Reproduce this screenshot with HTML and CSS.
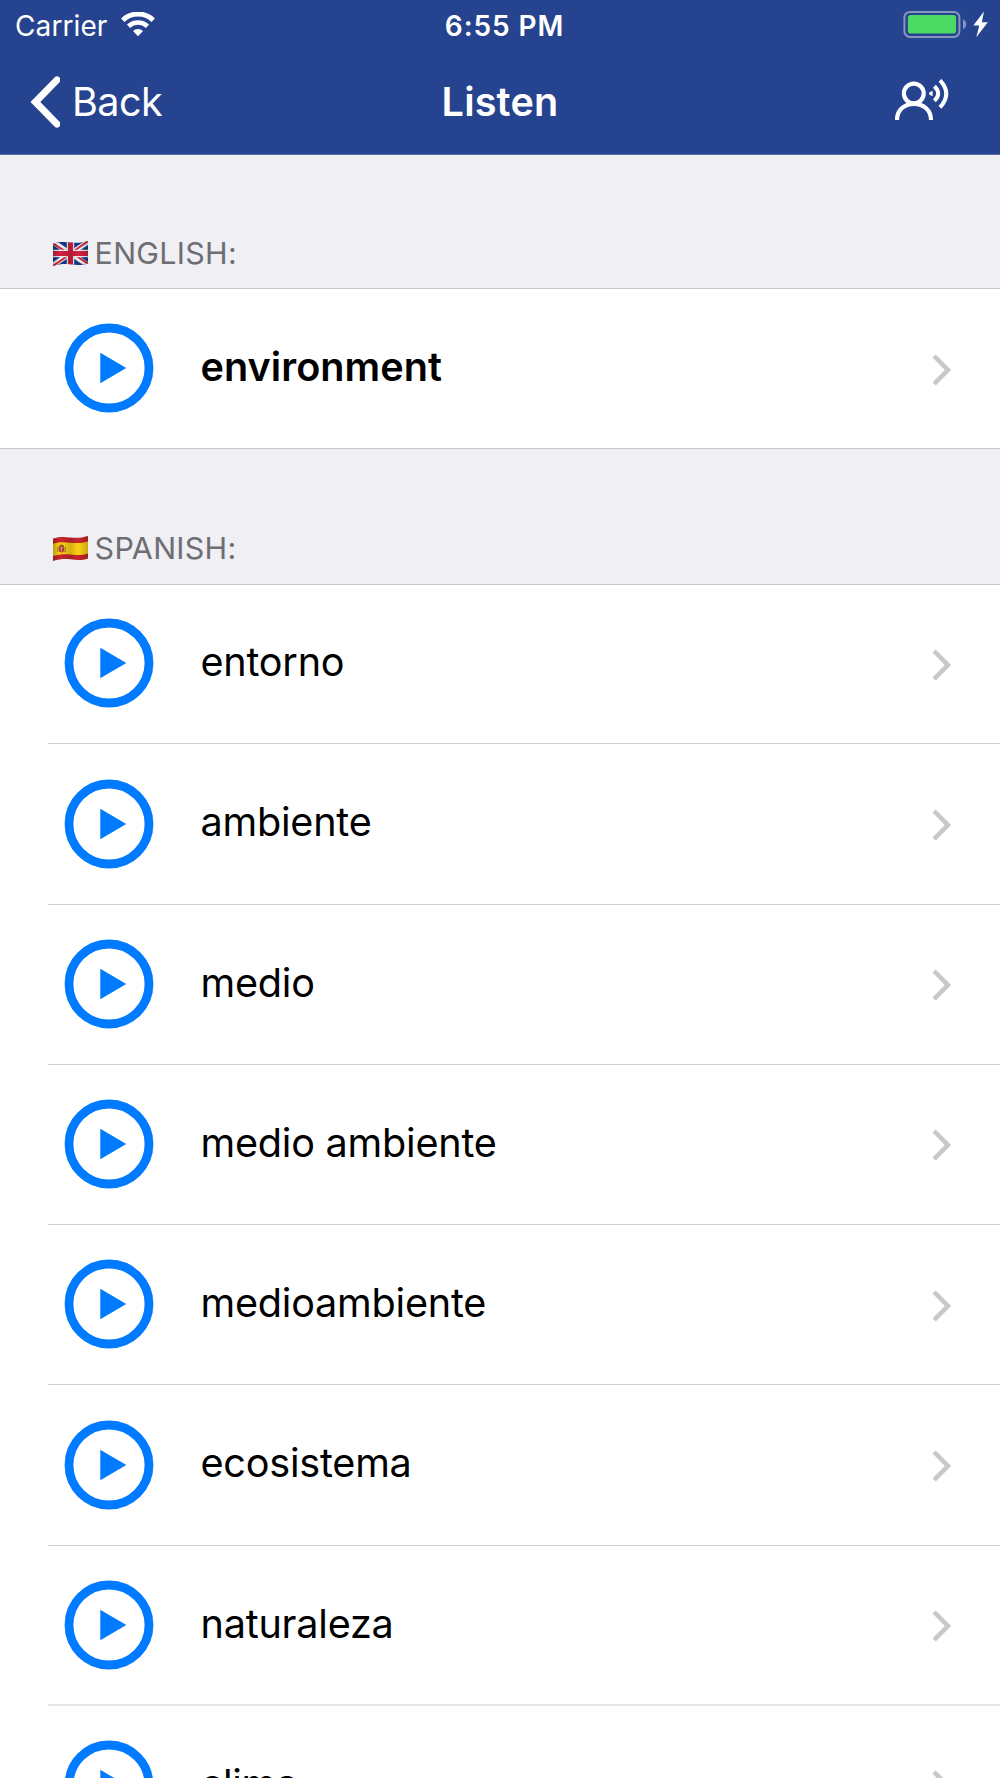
FILE: index.html
```html
<!DOCTYPE html>
<html lang="en">
<head>
<meta charset="utf-8">
<title>Listen</title>
<link rel="stylesheet" href="styles.css">
</head>
<body>
<svg class="symbols" aria-hidden="true">
  <symbol id="play" viewBox="0 0 90 90">
    <circle cx="45" cy="45" r="40" fill="none" stroke="#007aff" stroke-width="8.8"/>
    <path d="M36.3 29.8 62.3 45 36.3 60.2z" fill="#007aff"/>
  </symbol>
  <symbol id="chevron" viewBox="0 0 20 32">
    <path d="M2.1 2 15.9 16 2.1 30" fill="none" stroke="#c7c7cc" stroke-width="4.6"/>
  </symbol>
</svg>
<div class="screen">
  <header class="top">
    <div class="status">
      <div class="status-left">
        <span class="carrier">Carrier</span>
        <svg class="wifi" viewBox="0 0 34 25">
          <g fill="none" stroke="#fff">
            <path d="M1.8 8.2A21.8 21.8 0 0 1 32.2 8.2" stroke-width="5"/>
            <path d="M7.5 14.2A14 14 0 0 1 26.5 14.2" stroke-width="4.6"/>
          </g>
          <path d="M12 19A7.5 7.5 0 0 1 22 19L17 24.2z" fill="#fff"/>
        </svg>
      </div>
      <span class="clock">6:55 PM</span>
      <div class="status-right">
        <svg class="battery" viewBox="0 0 85 28">
          <rect x="1.4" y="1.9" width="55" height="25" rx="5.5" fill="none" stroke="#8795c1" stroke-width="2"/>
          <rect x="4.9" y="5.1" width="48.2" height="18.4" rx="2.8" fill="#4cd964"/>
          <path d="M60 9.4Q63.2 10.7 63.2 14.2T60 19z" fill="#8795c1"/>
          <path d="M81 1.5 70.3 15.6H76.3L73.3 27.2 84.8 12.3H78.8z" fill="#fff"/>
        </svg>
      </div>
    </div>
    <nav class="nav">
      <a class="back">
        <svg class="back-icon" viewBox="0 0 30 52"><path d="M27 3.9 5.4 26 27 48.1" fill="none" stroke="#fff" stroke-width="7" stroke-linecap="round"/></svg>
        <span class="back-label">Back</span>
      </a>
      <h1 class="title">Listen</h1>
      <div class="action">
        <svg class="voice" viewBox="0 0 54 42">
          <g fill="none" stroke="#fff" stroke-width="4.2">
            <circle cx="18.8" cy="14.5" r="9.9"/>
            <path d="M2 41C2 31.5 9 24.8 18.9 24.8S36 31.5 36 41"/>
            <path d="M39.4 7.3Q47 14.6 39.4 21.9" stroke-width="4"/>
            <path d="M45 1.3Q57.5 14.5 45 28.4" stroke-width="4"/>
          </g>
          <path d="M37.6 12V17Q34 16 34 14.5T37.6 12z" fill="#fff"/>
        </svg>
      </div>
    </nav>
  </header>

  <main>
    <section>
      <h2 class="section-title first">
        <svg class="flag" viewBox="0 0 35 25">
          <defs>
            <clipPath id="wave"><path d="M0 2.6C7 .2 11 .8 17.5 1.5S29 1.8 35 0V22.4C28 25 24 23.9 17.5 23.3S6 23.3 0 25z"/></clipPath>
            <linearGradient id="shade"><stop offset="0" stop-opacity=".25"/><stop offset=".2" stop-opacity="0"/><stop offset=".5" stop-opacity=".16"/><stop offset=".72" stop-opacity="0"/><stop offset="1" stop-opacity=".2"/></linearGradient>
          </defs>
          <g clip-path="url(#wave)">
            <path d="M0 0H35V25H0z" fill="#133b8c"/>
            <path d="M0 1 35 24M0 24 35 1" stroke="#f2f2f5" stroke-width="5"/>
            <path d="M0 2.3 14 11.5M35 22.7 21 13.5M0 25 14 15.2M35 .2 21 10" stroke="#d81f36" stroke-width="1.9"/>
            <path d="M17.5 0V25M0 12.5H35" stroke="#f2f2f5" stroke-width="7.4"/>
            <path d="M17.5 0V25M0 12.5H35" stroke="#d4213f" stroke-width="5"/>
            <path d="M0 0H35V25H0z" fill="url(#shade)"/>
          </g>
        </svg>
        <span class="label">ENGLISH:</span>
      </h2>
      <ul class="list single">
        <li class="row"><svg class="play"><use href="#play"/></svg><div class="cell"><span class="word strong">environment</span><svg class="chevron"><use href="#chevron"/></svg></div></li>
      </ul>
    </section>

    <section>
      <h2 class="section-title second">
        <svg class="flag" viewBox="0 0 35 25">
          <g clip-path="url(#wave)">
            <path d="M0 0H35V25H0z" fill="#c9252c"/>
            <path d="M0 7.8C7 5.6 11 6 17.5 6.7S29 7 35 5.4V17.4C28 19.6 24 19 17.5 18.4S6 18.3 0 20z" fill="#fcd116"/>
            <path d="M6 10.5h5v4.5q-2.5 3-5 0z" fill="#b5413c"/>
            <path d="M8.5 8.4v2M6.3 10h4.5" stroke="#8c4b20" stroke-width="1.5"/>
            <path d="M4.9 11v5.2M12.1 11v5.2" stroke="#94712c" stroke-width="1"/>
            <path d="M7.2 12h2.6M8.5 11.4v4" stroke="#e4bf89" stroke-width=".7"/>
            <path d="M0 0H35V25H0z" fill="url(#shade)"/>
          </g>
        </svg>
        <span class="label">SPANISH:</span>
      </h2>
      <ul class="list words">
        <li class="row"><svg class="play"><use href="#play"/></svg><div class="cell"><span class="word">entorno</span><svg class="chevron"><use href="#chevron"/></svg></div></li>
        <li class="row"><svg class="play"><use href="#play"/></svg><div class="cell"><span class="word">ambiente</span><svg class="chevron"><use href="#chevron"/></svg></div></li>
        <li class="row"><svg class="play"><use href="#play"/></svg><div class="cell"><span class="word">medio</span><svg class="chevron"><use href="#chevron"/></svg></div></li>
        <li class="row"><svg class="play"><use href="#play"/></svg><div class="cell"><span class="word">medio ambiente</span><svg class="chevron"><use href="#chevron"/></svg></div></li>
        <li class="row"><svg class="play"><use href="#play"/></svg><div class="cell"><span class="word">medioambiente</span><svg class="chevron"><use href="#chevron"/></svg></div></li>
        <li class="row"><svg class="play"><use href="#play"/></svg><div class="cell"><span class="word">ecosistema</span><svg class="chevron"><use href="#chevron"/></svg></div></li>
        <li class="row soft"><svg class="play"><use href="#play"/></svg><div class="cell"><span class="word">naturaleza</span><svg class="chevron"><use href="#chevron"/></svg></div></li>
        <li class="row"><svg class="play"><use href="#play"/></svg><div class="cell"><span class="word">clima</span><svg class="chevron"><use href="#chevron"/></svg></div></li>
      </ul>
    </section>
  </main>
</div>
</body>
</html>
```
FILE: styles.css
```css
* { box-sizing: border-box; }
body {
  margin: 0;
  font-family: Inter, "Liberation Sans", sans-serif;
  background: #efeff4;
  color: #000;
}
svg { display: block; flex: none; }
.symbols { display: none; }
.screen { width: 1000px; height: 1778px; overflow: hidden; }

.top {
  height: 155px;
  background: #26438f;
  color: #fff;
  border-bottom: 1px solid #5d6fa8;
}
.status {
  display: grid;
  grid-template-columns: 1fr auto 1fr;
  align-items: center;
  height: 50px;
}
.status-left { display: flex; align-items: center; padding-left: 15px; }
.carrier { width: 106px; padding-top: 2px; font-size: 28px; line-height: 34px; letter-spacing: 0.1px; }
.wifi { width: 34px; height: 25px; margin-top: -2px; }
.clock { padding: 2px 0 0 9px; font-size: 28px; line-height: 34px; font-weight: 600; letter-spacing: 0.9px; }
.status-right { display: flex; justify-content: flex-end; padding-right: 12px; }
.battery { width: 85px; height: 28px; margin-top: -2px; }

.nav {
  display: grid;
  grid-template-columns: 1fr auto 1fr;
  align-items: center;
  height: 104px;
}
.back { display: flex; align-items: center; padding-left: 30px; }
.back-icon { width: 30px; height: 52px; }
.back-label { margin-left: 12px; font-size: 39.6px; line-height: 48px; letter-spacing: -0.6px; }
.title { margin: 0; font-size: 39.6px; line-height: 48px; font-weight: 600; letter-spacing: 0.2px; }
.action { display: flex; justify-content: flex-end; padding-right: 51px; }
.voice { width: 54px; height: 42px; margin-top: -4px; }

.section-title {
  display: flex;
  align-items: flex-end;
  margin: 0;
  padding: 0 0 17px 53px;
  font-size: 30.4px;
  line-height: 36px;
  font-weight: 400;
  color: #6d6d72;
}
.first { height: 133px; }
.second { height: 135px; padding-bottom: 18px; }
.flag { width: 35px; height: 25px; margin-bottom: 5px; }
.label { margin-left: 6.6px; letter-spacing: 0.3px; }

.list { margin: 0; padding: 0; list-style: none; background: #fff; border-top: 1px solid #c8c7cc; }
.single { height: 161px; border-bottom: 1px solid #c8c7cc; }
.row { display: flex; height: 160.27px; padding-left: 48px; }
.play { width: 90px; height: 90px; margin: 34px 0 0 15.5px; }
.cell {
  display: flex;
  flex: 1;
  align-items: center;
  justify-content: space-between;
  padding: 0 48px 4px 47px;
}
.words .row {
  background: linear-gradient(#d0d0d4, #d0d0d4) right bottom / calc(100% - 48px) 1px no-repeat;
}
.words .row:first-child { margin-top: -1px; }
.words .play { margin-top: 34.3px; }
.words .row.soft { background-image: linear-gradient(#e6e6e8, #e6e6e8); background-size: calc(100% - 48px) 2px; }
.word { font-size: 39.6px; line-height: 48px; letter-spacing: -0.22px; }
.strong { font-weight: 600; letter-spacing: 0.05px; }
.chevron { width: 20px; height: 32px; margin-top: 5px; }
```
